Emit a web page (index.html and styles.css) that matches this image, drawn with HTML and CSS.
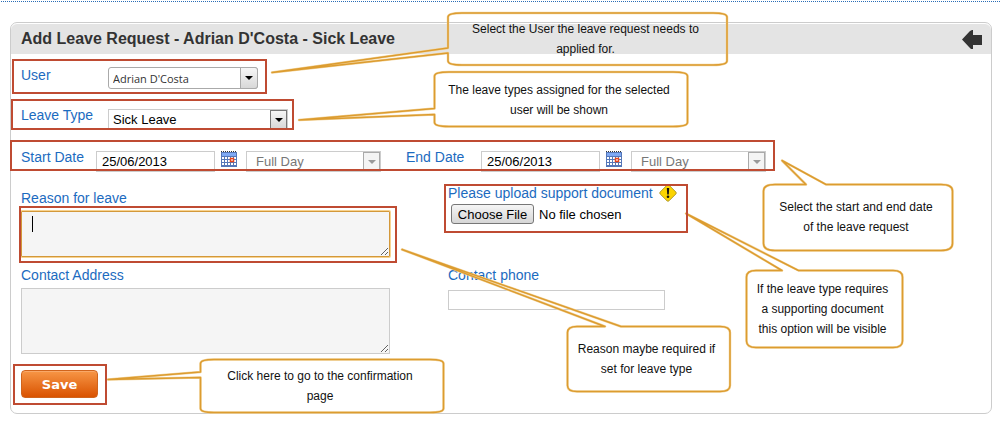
FILE: index.html
```html
<!DOCTYPE html>
<html lang="en">
<head>
  <meta charset="UTF-8" />
  <meta name="viewport" content="width=device-width, initial-scale=1.0"/>
  <title>Add Leave Request</title>
  <link rel="stylesheet" href="styles.css">
</head>
<body>

<main class="panel">
  <header class="panel-header">
    <h1>Add Leave Request - Adrian D'Costa - Sick Leave</h1>
    <button type="button" class="back" aria-label="Back">
      <svg width="20" height="19" viewBox="0 0 20 19"><path d="M0 9.500L8 1L10 0H11V5H20V15H11V19H9L7 17Z" fill="#333"/></svg>
    </button>
  </header>

  <form class="form">
    <div class="row row-user">
      <label for="user">User</label>
      <div class="select combo">
        <select id="user"><option>Adrian D'Costa</option></select>
        <span class="arrow"></span>
      </div>
    </div>

    <div class="row row-type">
      <label for="type">Leave Type</label>
      <div class="select type">
        <select id="type"><option>Sick Leave</option></select>
        <span class="arrow"></span>
      </div>
    </div>

    <div class="row row-dates">
      <div class="date-group">
        <label for="start">Start Date</label>
        <input type="text" class="date" id="start" value="25/06/2013">
        <button type="button" class="calendar" aria-label="Pick start date">
          <svg width="16" height="16" viewBox="0 0 16 16">
            <rect y="1" width="16" height="15" fill="#5577b8"/>
            <rect x="1" y="2" width="14" height="3" fill="#7fa9f4"/>
            <path d="M1 6h2v2H1zM4 6h2v2H4zM7 6h2v2H7zM10 6h2v2h-2zM13 6h2v2h-2zM1 9h2v2H1zM4 9h2v2H4zM7 9h2v2H7zM13 9h2v2h-2zM1 12h2v2H1zM4 12h2v2H4zM7 12h2v2H7zM10 12h2v2h-2zM13 12h2v2h-2z" fill="#fff"/>
            <rect x="9.500" y="7.500" width="3" height="3" fill="#fff" stroke="#e8451c" stroke-width="1.500"/>
            <path d="M0 .5h16" stroke="#333" stroke-dasharray="1 1"/>
          </svg>
        </button>
        <div class="select day">
          <select aria-label="Start day length" disabled><option>Full Day</option></select>
          <span class="arrow"></span>
        </div>
      </div>
      <div class="date-group">
        <label for="end">End Date</label>
        <input type="text" class="date" id="end" value="25/06/2013">
        <button type="button" class="calendar" aria-label="Pick end date">
          <svg width="16" height="16" viewBox="0 0 16 16">
            <rect y="1" width="16" height="15" fill="#5577b8"/>
            <rect x="1" y="2" width="14" height="3" fill="#7fa9f4"/>
            <path d="M1 6h2v2H1zM4 6h2v2H4zM7 6h2v2H7zM10 6h2v2h-2zM13 6h2v2h-2zM1 9h2v2H1zM4 9h2v2H4zM7 9h2v2H7zM13 9h2v2h-2zM1 12h2v2H1zM4 12h2v2H4zM7 12h2v2H7zM10 12h2v2h-2zM13 12h2v2h-2z" fill="#fff"/>
            <rect x="9.500" y="7.500" width="3" height="3" fill="#fff" stroke="#e8451c" stroke-width="1.500"/>
            <path d="M0 .5h16" stroke="#333" stroke-dasharray="1 1"/>
          </svg>
        </button>
        <div class="select day">
          <select aria-label="End day length" disabled><option>Full Day</option></select>
          <span class="arrow"></span>
        </div>
      </div>
    </div>

    <div class="columns">
      <div class="column left">
        <label for="reason">Reason for leave</label>
        <div class="reason-box">
          <textarea id="reason" class="reason"></textarea>
          <span class="caret"></span>
        </div>
        <label for="address">Contact Address</label>
        <textarea id="address" class="address"></textarea>
      </div>
      <div class="column right">
        <div class="upload-label">
          <label for="document">Please upload support document</label>
          <svg width="18" height="18" viewBox="0 0 18 18">
            <path d="M8 1.200Q9 .3 10 1.200L16.800 8Q17.700 9 16.800 10L10 16.800Q9 17.700 8 16.800L1.200 10Q.3 9 1.200 8Z" fill="#fbd400" stroke="#b29a28"/>
            <path d="M7.800 4h2.400L9.800 10.500H8.200Z" fill="#111"/>
            <circle cx="9" cy="12.800" r="1.300" fill="#111"/>
          </svg>
        </div>
        <input type="file" id="document" class="file">
        <label for="phone">Contact phone</label>
        <input type="text" id="phone" class="phone">
      </div>
    </div>

    <button type="submit" class="save">Save</button>
  </form>
</main>

<!-- help notes drawn over the form -->
<div class="notes">
  <div class="mark mark-user"></div>
  <div class="mark mark-type"></div>
  <div class="mark mark-dates"></div>
  <div class="mark mark-reason"></div>
  <div class="mark mark-upload"></div>
  <div class="mark mark-save"></div>

  <svg class="bubbles" width="1000" height="428" viewBox="0 0 1000 428">
    <defs>
      <g id="shapes">
        <path d="M448 48V17Q448 13 462 13H713Q727 13 727 17V61Q727 65 713 65H462Q448 65 448 61V53L272 72.500Z"/>
        <path d="M434.500 108.500V76Q434.500 72 449 72H673Q687.500 72 687.500 76V122.500Q687.500 126.500 673 126.500H449Q434.500 126.500 434.500 122.500V114.500L299 120Z"/>
        <path d="M806 184.500H775Q763.500 184.500 763.500 191V243.500Q763.500 250.500 775 250.500H941Q952.500 250.500 952.500 243.500V191Q952.500 184.500 941 184.500H826L782 160.500Z"/>
        <path d="M782 270.500H756Q746.500 270.500 746.500 277V341Q746.500 347.500 756 347.500H893Q902.500 347.500 902.500 341V277Q902.500 270.500 893 270.500H798.500L686 213.500Z"/>
        <path d="M605 326.500H577Q567.500 326.500 567.500 332.500V385.500Q567.500 391.500 577 391.500H720Q730 391.500 730 385.500V332.500Q730 326.500 720 326.500H621L402 249.500Z"/>
        <path d="M200.500 372V363.500Q200.500 359.500 214 359.500H430Q443.500 359.500 443.500 363.500V408.500Q443.500 412.500 430 412.500H214Q200.500 412.500 200.500 408.500V377.500L108 379.500Z"/>
      </g>
    </defs>
    <use href="#shapes" class="glow"/>
    <use href="#shapes" class="line"/>
  </svg>

  <div class="note note-user">Select the User the leave request needs to<br>applied for.</div>
  <div class="note note-type">The leave types assigned for the selected<br>user will be shown</div>
  <div class="note note-dates">Select the start and end date<br>of the leave request</div>
  <div class="note note-upload">If the leave type requires<br>a supporting document<br>this option will be visible</div>
  <div class="note note-reason">Reason maybe required if<br>set for leave type</div>
  <div class="note note-save">Click here to go to the confirmation<br>page</div>
</div>

</body>
</html>
```
FILE: styles.css
```css
* {
  box-sizing: border-box;
}

body {
  position: relative;
  margin: 0;
  padding: 1px 0 0;
  background: #fff;
  font-family: "Liberation Sans", Arial, sans-serif;
  font-size: 14px;
}

/* dotted rule across the top of the page */
body::before {
  content: "";
  display: block;
  height: 1px;
  margin: 0 0 20px 1px;
  background: repeating-linear-gradient(90deg, #2a6db5 0 1px, #fff 1px 2px);
}

.panel {
  margin: 0 8px 0 10px;
  padding-top: 1px;
  border: 1px solid #ccc;
  border-radius: 7px;
}

.panel-header {
  display: flex;
  align-items: center;
  justify-content: space-between;
  height: 30px;
  padding: 0 9px 0 10px;
  background: #e4e4e4;
  border-radius: 6px 6px 0 0;
}

h1 {
  margin: 0;
  font-size: 16px;
  line-height: 20px;
  color: #333;
}

.back,
.calendar {
  padding: 0;
  border: none;
  background: none;
  cursor: pointer;
}

svg {
  display: block;
}

.form {
  padding: 13px 10px 15px;
}

label {
  color: #1c6bc0;
  line-height: 16px;
}

.row {
  display: flex;
  align-items: flex-start;
}

.row-user {
  height: 42px;
}

.row-type {
  height: 42px;
}

.row-user label,
.row-type label {
  width: 87px;
}

.row-type label,
.row-dates label {
  line-height: 12px;
}

select,
input,
textarea {
  margin: 0;
  border: 1px solid #ccc;
  border-radius: 0;
  font-family: inherit;
  font-size: 13px;
  color: #000;
  background: #fff;
}

.select {
  position: relative;
}

.select select {
  display: block;
  width: 100%;
  height: 100%;
  padding: 0 4px;
  appearance: none;
}

/* drop-down button, laid over the right end of the select */
.arrow {
  position: absolute;
  top: 1px;
  right: 1px;
  bottom: 1px;
  display: flex;
  align-items: center;
  justify-content: center;
  width: 17px;
  border: 1px solid #777;
  background: linear-gradient(#f6f6f6, #d8d8d8);
  pointer-events: none;
}

.arrow::after {
  content: "";
  border: 4px solid transparent;
  border-top-color: #000;
  border-bottom: 0;
}

.combo {
  width: 150px;
  height: 22px;
}

.combo select {
  border-color: #aaa;
  border-radius: 3px;
  font-family: "Open Sans", sans-serif;
  font-size: 11px;
  color: #333;
}

.combo .arrow {
  top: 0;
  right: 0;
  bottom: 0;
  width: 18px;
  border-color: #aaa;
  border-radius: 0 3px 3px 0;
}

.type {
  width: 180px;
  height: 21px;
}

.row-dates {
  gap: 25px;
  height: 38px;
}

.date-group {
  display: flex;
}

.date-group label {
  width: 75px;
}

.date {
  width: 119px;
  height: 21px;
  padding: 0 5px;
}

.calendar {
  margin: 0 9px 0 6px;
  height: 16px;
}

.day {
  width: 135px;
  height: 21px;
}

.day select {
  padding: 0 9px;
  color: #777;
  opacity: 1;
}

.day .arrow {
  border-color: #aaa;
  background: #f4f4f4;
}

.day .arrow::after {
  border-top-color: #999;
}

.columns {
  display: grid;
  grid-template-columns: 369px 217px;
  column-gap: 58px;
}

.column {
  display: flex;
  flex-direction: column;
  align-items: flex-start;
}

.reason-box {
  position: relative;
  width: 100%;
  margin: 5px 0 10px;
}

textarea {
  display: block;
  width: 100%;
  background: #f5f5f5;
}

.reason {
  height: 46px;
  border-color: #d3983a;
  border-radius: 1px;
  box-shadow: 0 0 0 1px #f7d391;
}

.caret {
  position: absolute;
  top: 5px;
  left: 11px;
  width: 1px;
  height: 16px;
  background: #000;
}

.address {
  height: 66px;
  margin-top: 5px;
}

.left {
  padding-top: 1px;
}

.upload-label {
  display: flex;
  align-items: center;
  gap: 6px;
  height: 18px;
  white-space: nowrap;
}

.right {
  margin-top: -5px;
}

.file {
  width: 237px;
  height: 20px;
  margin: 2px 0 43px 3px;
  border: none;
  background: none;
}

.file::file-selector-button {
  height: 20px;
  width: 83px;
  margin: 0 5px 0 0;
  padding: 0;
  border: 1px solid #777;
  border-radius: 3px;
  background: linear-gradient(#f5f5f5, #d6d6d6);
  font-family: inherit;
  font-size: 13px;
}

.phone {
  width: 100%;
  height: 20px;
  margin-top: 7px;
}

.save {
  display: block;
  width: 77px;
  height: 28px;
  margin-top: 16px;
  border: 1px solid #d0641c;
  border-radius: 4px;
  background: linear-gradient(#f79646, #d95200);
  box-shadow: inset 0 1px 0 #f9a868;
  font-family: "DejaVu Sans", Verdana, sans-serif;
  font-size: 13px;
  font-weight: bold;
  color: #fff;
}

.notes {
  position: absolute;
  top: 0;
  left: 0;
  pointer-events: none;
}

.mark,
.note {
  position: absolute;
}

.mark {
  border: 2px solid #bf4b32;
}

.mark-user { left: 12px; top: 59px; width: 255px; height: 35px; }
.mark-type { left: 11px; top: 99px; width: 283px; height: 31px; }
.mark-dates { left: 10px; top: 140px; width: 765px; height: 31px; }
.mark-reason { left: 19px; top: 206px; width: 378px; height: 57px; }
.mark-upload { left: 444px; top: 184px; width: 244px; height: 49px; }
.mark-save { left: 13px; top: 364px; width: 94px; height: 41px; }

.bubbles {
  fill: none;
  stroke-linejoin: round;
}

.glow {
  stroke: #f3d6a0;
  stroke-width: 2.500px;
}

.line {
  stroke: #dc9c30;
  stroke-width: 1.500px;
}

.note {
  display: flex;
  align-items: center;
  justify-content: center;
  padding-right: 4px;
  font-size: 12px;
  line-height: 20px;
  text-align: center;
  white-space: nowrap;
  color: #111;
}

.note-user { left: 448px; top: 13px; width: 279px; height: 52px; }
.note-type { left: 434px; top: 73px; width: 254px; height: 54px; }
.note-dates { left: 763px; top: 184px; width: 190px; height: 66px; }
.note-upload { left: 746px; top: 270px; width: 157px; height: 78px; }
.note-reason { left: 567px; top: 326px; width: 163px; height: 66px; }
.note-save { left: 200px; top: 359px; width: 244px; height: 54px; }
```
